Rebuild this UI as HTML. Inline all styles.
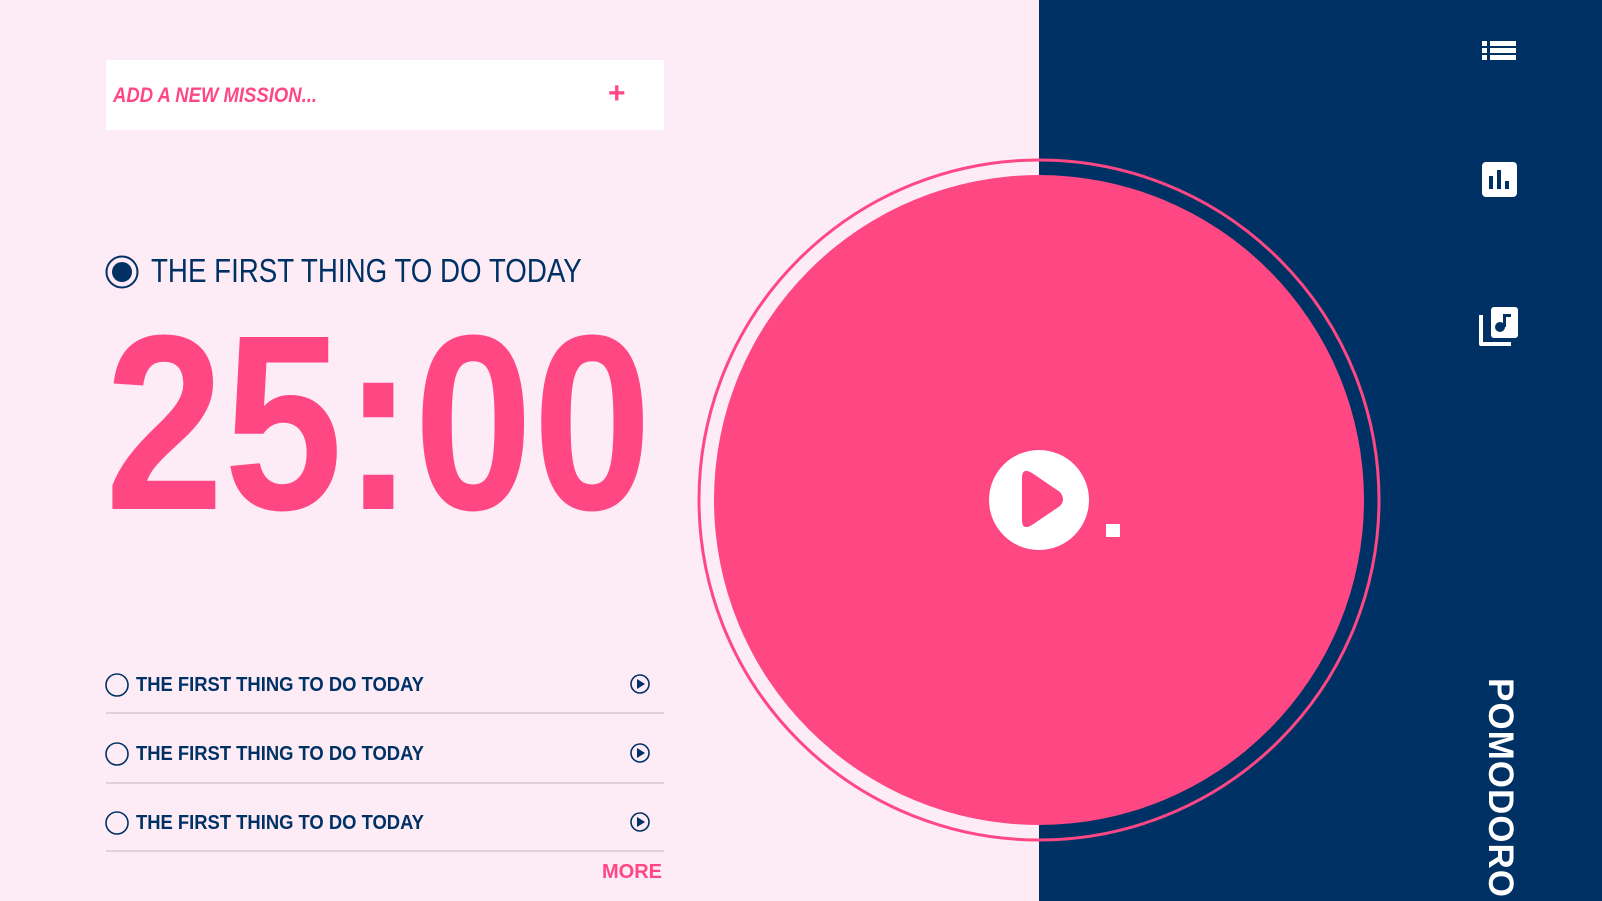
<!DOCTYPE html>
<html><head><meta charset="utf-8"><style>
html,body{margin:0;padding:0;width:1602px;height:901px;overflow:hidden;background:#FDEBF6;font-family:"Liberation Sans",sans-serif}
.abs{position:absolute}
.t{transform-origin:left center;display:inline-block;white-space:nowrap}
</style></head><body>
<div class="abs" style="left:1039px;top:0;width:563px;height:901px;background:#003165"></div>
<svg class="abs" style="left:0;top:0" width="1602" height="901">
  <circle cx="1039" cy="500" r="340" fill="none" stroke="#FF4784" stroke-width="3"/>
  <circle cx="1039" cy="500" r="325" fill="#FF4784"/>
  <circle cx="1039" cy="500" r="50" fill="#fff"/>
  <path d="M1022 478 Q1022 467 1032 473 L1060 492 Q1066 500 1060 506 L1032 525 Q1022 531 1022 520 Z" fill="#FF4784"/>
  <rect x="1106" y="524" width="14" height="13" fill="#fff"/>
  <g fill="#fff">
    <rect x="1482" y="41" width="5" height="5"/><rect x="1490" y="41" width="26" height="5"/>
    <rect x="1482" y="48" width="5" height="5"/><rect x="1490" y="48" width="26" height="5"/>
    <rect x="1482" y="55" width="5" height="5"/><rect x="1490" y="55" width="26" height="5"/>
    <rect x="1482" y="162" width="35" height="35" rx="4"/>
    <rect x="1491" y="307" width="27" height="31" rx="3"/>
    <path d="M1479 315 h4 v27 h28 v4 h-30 a2 2 0 0 1 -2 -2 z"/>
  </g>
  <g fill="#003165">
    <rect x="1489" y="176" width="4" height="13"/><rect x="1497" y="170" width="4" height="19"/><rect x="1505" y="181" width="4" height="8"/>
    <circle cx="1500" cy="327" r="5"/><rect x="1503" y="314" width="3" height="13"/><rect x="1503" y="314" width="8" height="3"/>
  </g>
  <circle cx="122" cy="272" r="15.5" fill="none" stroke="#003165" stroke-width="2"/>
  <circle cx="122" cy="272" r="10" fill="#003165"/>
  <g fill="none" stroke="#003165" stroke-width="1.6">
    <circle cx="117" cy="685" r="11"/><circle cx="117" cy="754" r="11"/><circle cx="117" cy="823" r="11"/>
    <circle cx="640" cy="684" r="9"/><circle cx="640" cy="753" r="9"/><circle cx="640" cy="822" r="9"/>
  </g>
  <g fill="#003165">
    <path d="M637 679 L645 684 L637 689Z"/><path d="M637 748 L645 753 L637 758Z"/><path d="M637 817 L645 822 L637 827Z"/>
  </g>
  <g stroke="#D9C8D2" stroke-width="1.5">
    <line x1="106" y1="713" x2="664" y2="713"/><line x1="106" y1="783" x2="664" y2="783"/><line x1="106" y1="851" x2="664" y2="851"/>
  </g>
</svg>
<div class="abs" style="left:106px;top:60px;width:558px;height:70px;background:#fff"></div>
<div class="abs" style="left:113px;top:84px;font-size:21px;font-style:italic;font-weight:bold;color:#FF4784"><span class="t" style="transform:scaleX(0.88)">ADD A NEW MISSION...</span></div>
<div class="abs" style="left:608px;top:79px;font-size:30px;font-weight:bold;color:#FF4784;line-height:1">+</div>
<div class="abs" style="left:151px;top:254px;font-size:33px;color:#003165;line-height:1"><span class="t" style="transform:scaleX(0.84)">THE FIRST THING TO DO TODAY</span></div>
<div class="abs" style="left:105px;top:298px;font-size:250px;color:#FF4784;line-height:1;font-weight:bold"><span class="t" style="transform:scaleX(0.855)">25:00</span></div>
<div class="abs" style="left:136px;top:675px;font-size:20px;font-weight:bold;color:#003165;line-height:1"><span class="t" style="transform:scaleX(0.92)">THE FIRST THING TO DO TODAY</span></div>
<div class="abs" style="left:136px;top:744px;font-size:20px;font-weight:bold;color:#003165;line-height:1"><span class="t" style="transform:scaleX(0.92)">THE FIRST THING TO DO TODAY</span></div>
<div class="abs" style="left:136px;top:813px;font-size:20px;font-weight:bold;color:#003165;line-height:1"><span class="t" style="transform:scaleX(0.92)">THE FIRST THING TO DO TODAY</span></div>
<div class="abs" style="left:602px;top:862px;font-size:20px;color:#FF4784;font-weight:bold;line-height:1">MORE</div>
<div class="abs" style="left:1483px;top:678px;writing-mode:vertical-rl;font-size:35px;font-weight:bold;color:#fff;line-height:1;letter-spacing:1px">POMODORO</div>
</body></html>
